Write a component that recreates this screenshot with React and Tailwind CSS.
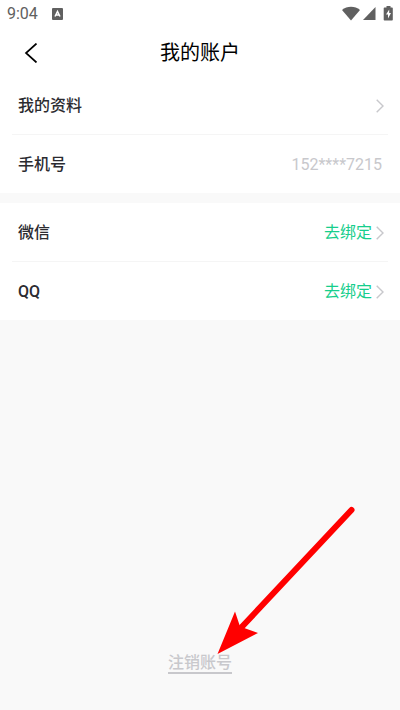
const FONT = "font-[Roboto,'Noto_Sans_CJK_SC',sans-serif]";

function StatusBar() {
  return (
    <div className="flex h-7 items-center justify-between px-[7px] text-[#606060]">
      <div className="flex items-center gap-[14px]">
        <span className="text-base leading-7">9:04</span>
        <svg width="11" height="12" viewBox="0 0 11 12" aria-hidden="true">
          <rect width="11" height="12" rx="1" fill="currentColor" />
          <path d="M3 8.5 5.5 3.5 8 8.5M4 7h3" fill="none" stroke="#fff" strokeWidth="1.5" />
        </svg>
      </div>
      <svg width="51" height="16" viewBox="0 0 51 16" fill="currentColor" aria-hidden="true">
        <path d="M0 4C5-.3 13-.3 18 4L9 14.500Z" />
        <path d="M33.500 1v13H21Z" />
        <path d="M42.500 1.500h2V0h4v1.500h1.500q.8 0 .8.800v11.400q0 .8-.8.8h-7.500q-.8 0-.8-.8V2.300q0-.8.8-.8Z" />
        <path d="M47.200 3.500 44 8.500h2v4L49 7h-1.800Z" fill="#fff" />
      </svg>
    </div>
  );
}

function Chevron() {
  return (
    <svg width="8" height="14" viewBox="0 0 8 14" fill="none" stroke="#c8c8cc" strokeWidth="1.4" aria-hidden="true">
      <path d="M.7.7 7 7 .7 13.300" />
    </svg>
  );
}

function Row({ label, action, last }) {
  return (
    <li className="px-3">
      <button
        type="button"
        className={`flex w-full items-center justify-between pt-[2px] pl-[6px] pr-1 ${last ? "h-[58px]" : "h-[59px] border-b border-[#f5f5f5]"}`}
      >
        <span className="font-medium text-[#2b2b30]">{label}</span>
        <span className="flex items-center gap-1 text-[#16ce8c]">
          {action}
          <Chevron />
        </span>
      </button>
    </li>
  );
}

function Pointer() {
  return (
    <svg
      className="pointer-events-none absolute bottom-5 left-12"
      width="140"
      height="150"
      viewBox="0 0 140 150"
      aria-hidden="true"
    >
      <path d="M135.500 6 22 127" stroke="#f00" strokeWidth="6" strokeLinecap="round" />
      <path d="M1.500 150 19 107.500 24 122.500 42 129Z" fill="#f00" />
    </svg>
  );
}

export default function App() {
  return (
    <div className={`flex min-h-screen flex-col bg-[#f9f9f9] text-base ${FONT}`}>
      <header className="bg-white">
        <StatusBar />
        <div className="grid h-12 grid-cols-3 items-center px-6 pt-[2px]">
          <button type="button" aria-label="返回" className="w-fit">
            <svg width="14" height="20" viewBox="0 0 14 20" fill="none" stroke="#000" strokeWidth="1.700">
              <path d="M12.500.5 2 10 12.500 19.500" />
            </svg>
          </button>
          <h1 className="text-center text-xl whitespace-nowrap text-black">我的账户</h1>
        </div>
      </header>

      <main className="flex grow flex-col">
        <ul className="bg-white">
          <Row label="我的资料" />
          <li className="flex h-[58px] items-center justify-between px-[18px] pt-[2px]">
            <span className="font-medium text-[#2b2b30]">手机号</span>
            <span className="text-[#c8c8cc]">152****7215</span>
          </li>
        </ul>

        <ul className="mt-[10px] bg-white">
          <Row label="微信" action="去绑定" />
          <Row label="QQ" action="去绑定" last />
        </ul>

        <div className="mt-auto flex justify-center pb-9">
          <div className="relative">
            <button type="button" className="block border-b-2 border-[#c8c8cc] font-medium leading-[18px] text-[#c8c8cc]">
              注销账号
            </button>
            <Pointer />
          </div>
        </div>
      </main>
    </div>
  );
}
